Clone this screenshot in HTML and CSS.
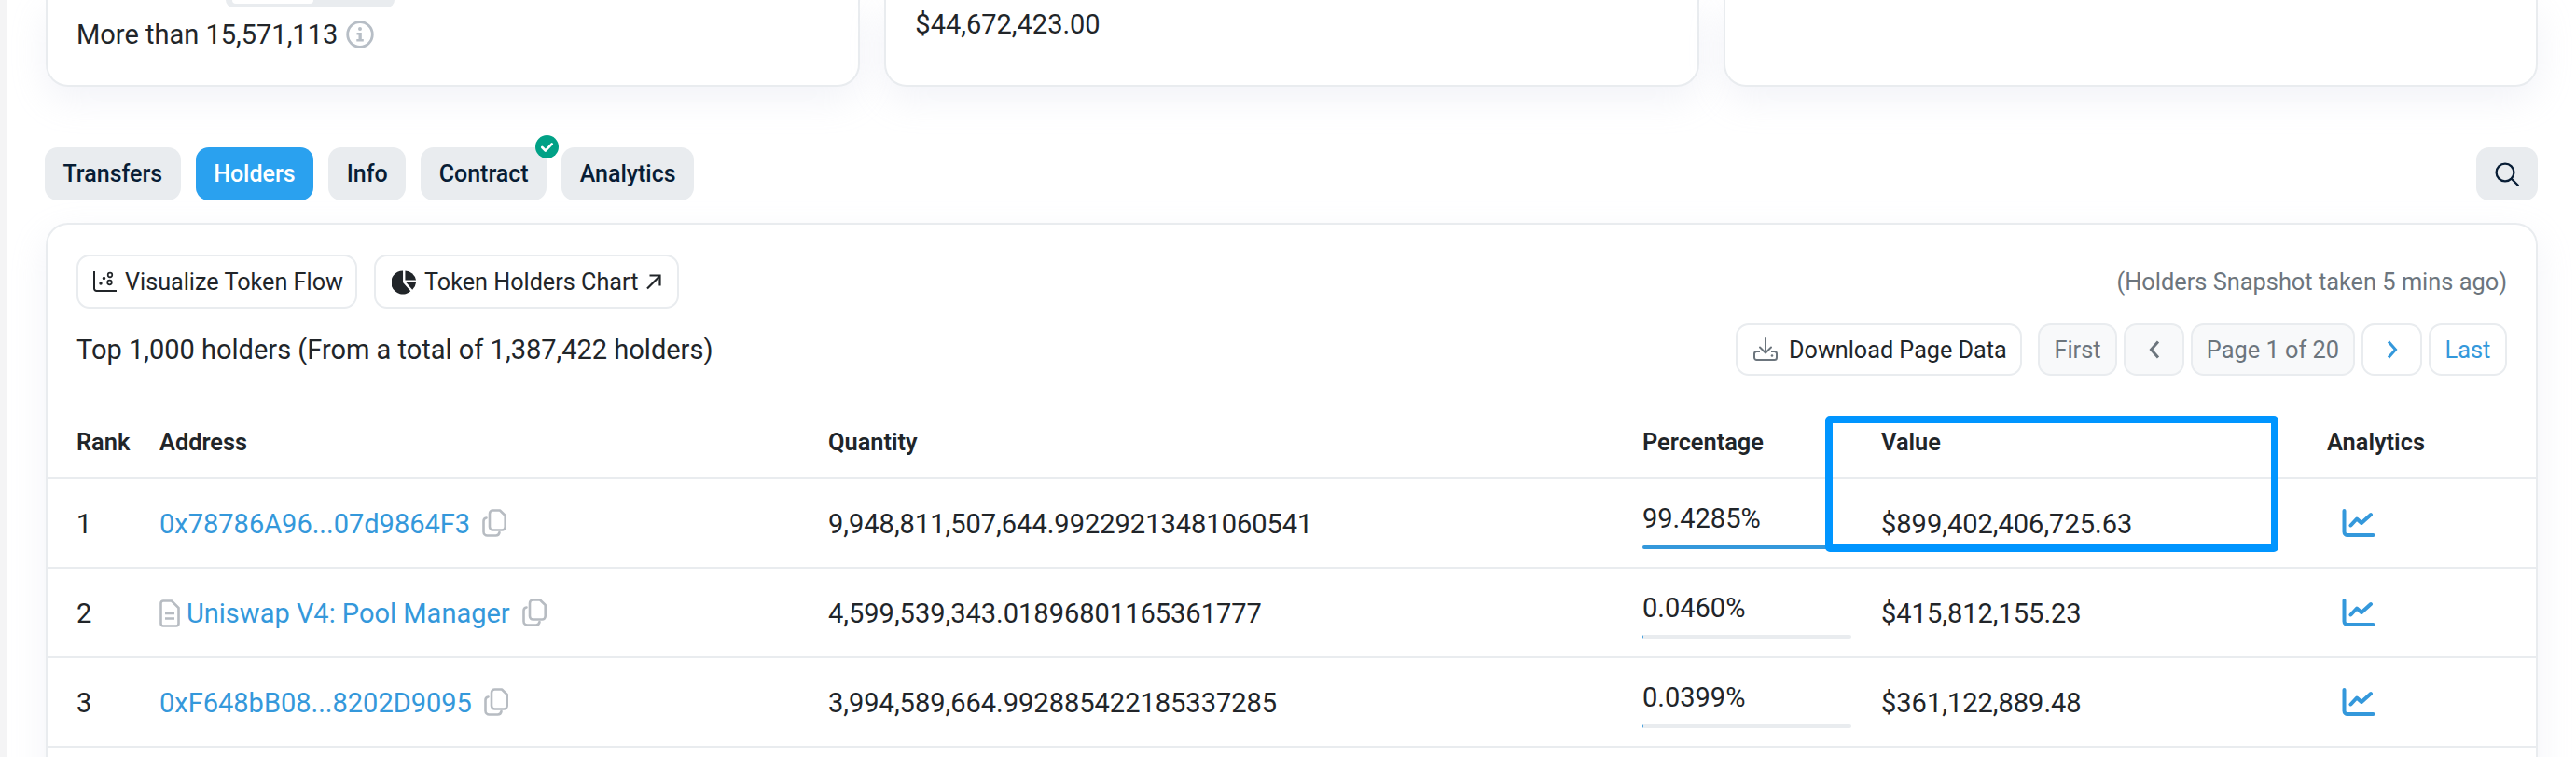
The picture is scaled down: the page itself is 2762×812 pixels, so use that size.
FILE: index.html
```html
<!DOCTYPE html>
<html lang="en">
<head>
<meta charset="utf-8">
<title>Token Holders</title>
<link rel="stylesheet" href="styles.css">
</head>
<body>
<div class="page">
  <section class="cards">
    <div class="card">
      <div class="pill"><span class="pill-on"></span></div>
      <div class="card-line">More than 15,571,113
        <svg class="info" viewBox="0 0 30 30"><circle cx="15" cy="15" r="13.300" fill="none" stroke="#b7bec6" stroke-width="2.800"/><circle cx="15" cy="9" r="2" fill="#b7bec6"/><path d="M11.500 13h5.300v7h2v2.500h-7.500V20h2.200v-4.500h-2z" fill="#b7bec6"/></svg>
      </div>
    </div>
    <div class="card"><div class="card-value">$44,672,423.00</div></div>
    <div class="card"></div>
  </section>

  <nav class="tabs">
    <a class="tab">Transfers</a>
    <a class="tab tab-active">Holders</a>
    <a class="tab">Info</a>
    <a class="tab tab-badged">Contract
      <span class="badge"><svg viewBox="0 0 24 24"><path d="M7 12.500l3.400 3.400L17 9" fill="none" stroke="#fff" stroke-width="2.600" stroke-linecap="round" stroke-linejoin="round"/></svg></span>
    </a>
    <a class="tab">Analytics</a>
    <a class="tab tab-search"><svg viewBox="0 0 28 28" class="ico-search"><circle cx="12" cy="12" r="9.400" fill="none" stroke="#081d35" stroke-width="2.300"/><path d="M18.800 18.800l7 7" stroke="#081d35" stroke-width="2.300" stroke-linecap="round"/></svg></a>
  </nav>

  <section class="panel">
    <div class="toolbar toolbar-one">
      <div class="btn-group">
        <a class="btn btn-flow">
          <svg class="ico-flow" viewBox="0 0 25 22"><path d="M1 0.500V18.500a2.500 2.500 0 0 0 2.500 2.500H24.500" fill="none" stroke="#212529" stroke-width="2" stroke-linecap="round"/><circle cx="8" cy="13" r="1.700" fill="#212529"/><circle cx="11.500" cy="7.500" r="1.700" fill="#212529"/><circle cx="18" cy="4" r="2.300" fill="none" stroke="#212529" stroke-width="1.700"/><circle cx="17.500" cy="12" r="2.300" fill="none" stroke="#212529" stroke-width="1.700"/></svg>
          Visualize Token Flow
        </a>
        <a class="btn btn-chart">
          <svg class="ico-pie" viewBox="0 0 28 28"><path d="M12.500 1.500v13l8.500 9.700A13 13 0 1 1 12.500 1.500z" fill="#212529"/><path d="M15 1.500A12.500 12.500 0 0 1 27 12h-12z" fill="#212529"/><path d="M16 14.600h11a12.500 12.500 0 0 1-4 8z" fill="#212529"/></svg>
          Token Holders Chart
          <svg class="ico-arrow" viewBox="0 0 18 18"><path d="M2 16.500L15 3.500M4.500 2.500h11V13.500" fill="none" stroke="#212529" stroke-width="2.200"/></svg>
        </a>
      </div>
      <span class="snapshot">(Holders Snapshot taken 5 mins ago)</span>
    </div>
    <div class="toolbar toolbar-two">
      <span class="summary">Top 1,000 holders (From a total of 1,387,422 holders)</span>
      <div class="pager">
        <a class="btn btn-download">
          <svg class="ico-download" viewBox="0 0 26 26"><path d="M13 1v15M7 10.500l6 6 6-6" fill="none" stroke="#6c757d" stroke-width="2" stroke-linecap="round" stroke-linejoin="round"/><path d="M7 15H3.500A2.500 2.500 0 0 0 1 17.500v4A2.500 2.500 0 0 0 3.500 24h19a2.500 2.500 0 0 0 2.500-2.500v-4a2.500 2.500 0 0 0-2.500-2.500H19" fill="none" stroke="#6c757d" stroke-width="2"/><circle cx="20" cy="19.500" r="1.300" fill="#6c757d"/></svg>
          Download Page Data
        </a>
        <span class="pg pg-off pg-first">First</span>
        <span class="pg pg-off pg-prev"><svg class="chev" viewBox="0 0 14 22"><path d="M11 2.500L3.500 11 11 19.500" fill="none" stroke="#6c757d" stroke-width="3"/></svg></span>
        <span class="pg pg-off pg-page">Page 1 of 20</span>
        <a class="pg pg-on pg-next"><svg class="chev" viewBox="0 0 14 22"><path d="M3 2.500l7.500 8.500L3 19.500" fill="none" stroke="#3498db" stroke-width="3"/></svg></a>
        <a class="pg pg-on pg-last">Last</a>
      </div>
    </div>

    <div class="table-wrap">
      <table class="holders">
        <colgroup>
          <col class="c-rank"><col class="c-addr"><col class="c-qty"><col class="c-pct"><col class="c-val"><col>
        </colgroup>
        <thead>
          <tr><th class="first">Rank</th><th>Address</th><th>Quantity</th><th>Percentage</th><th>Value</th><th>Analytics</th></tr>
        </thead>
        <tbody>
          <tr>
            <td class="first">1</td>
            <td><a class="addr">0x78786A96...07d9864F3</a><svg class="ico-copy" viewBox="0 0 26 30"><use href="#copy"/></svg></td>
            <td>9,948,811,507,644.99229213481060541</td>
            <td class="pct"><div class="pct-text">99.4285%</div><div class="bar"><div class="fill" style="width:99.43%"></div></div></td>
            <td>$899,402,406,725.63</td>
            <td><svg class="ico-an" viewBox="0 0 36 31"><use href="#an"/></svg></td>
          </tr>
          <tr>
            <td class="first">2</td>
            <td><svg class="ico-doc" viewBox="0 0 22 30"><path d="M4 1.500h9l7.500 7.500v17a2.500 2.500 0 0 1-2.500 2.500H4A2.500 2.500 0 0 1 1.500 26V4A2.500 2.500 0 0 1 4 1.500z" fill="none" stroke="#b7bcc2" stroke-width="2.600"/><path d="M6 15h10M6 20.500h10" stroke="#b7bcc2" stroke-width="2.400"/></svg><a class="addr">Uniswap V4: Pool Manager</a><svg class="ico-copy" viewBox="0 0 26 30"><use href="#copy"/></svg></td>
            <td>4,599,539,343.01896801165361777</td>
            <td class="pct"><div class="pct-text">0.0460%</div><div class="bar"><div class="fill" style="width:0.5%"></div></div></td>
            <td>$415,812,155.23</td>
            <td><svg class="ico-an" viewBox="0 0 36 31"><use href="#an"/></svg></td>
          </tr>
          <tr>
            <td class="first">3</td>
            <td><a class="addr">0xF648bB08...8202D9095</a><svg class="ico-copy" viewBox="0 0 26 30"><use href="#copy"/></svg></td>
            <td>3,994,589,664.992885422185337285</td>
            <td class="pct"><div class="pct-text">0.0399%</div><div class="bar"><div class="fill" style="width:0.5%"></div></div></td>
            <td>$361,122,889.48</td>
            <td><svg class="ico-an" viewBox="0 0 36 31"><use href="#an"/></svg></td>
          </tr>
          <tr class="row-clipped"><td colspan="6"></td></tr>
        </tbody>
      </table>
      <div class="highlight"></div>
    </div>
  </section>
</div>

<svg class="defs" width="0" height="0">
  <defs>
    <symbol id="copy" viewBox="0 0 26 30">
      <path d="M8 5a3.500 3.500 0 0 1 3.500-3.500h7.500l5.700 5.500V19a3.500 3.500 0 0 1-3.500 3.500H11.500A3.500 3.500 0 0 1 8 19z" fill="none" stroke="#b7bcc2" stroke-width="2.600" stroke-linejoin="round"/>
      <path d="M4.500 9.500A3.500 3.500 0 0 0 1.500 13V24.500A4 4 0 0 0 5.500 28.500h9a4 4 0 0 0 4-3.500" fill="none" stroke="#b7bcc2" stroke-width="2.600" stroke-linecap="round"/>
    </symbol>
    <symbol id="an" viewBox="0 0 36 31">
      <path d="M2.500 2V24.500a3.500 3.500 0 0 0 3.500 3.500H33.500" fill="none" stroke="#3498db" stroke-width="4" stroke-linecap="round"/>
      <path d="M9.500 17.500L16 10.500 21 15 31 6" fill="none" stroke="#3498db" stroke-width="4" stroke-linecap="round" stroke-linejoin="round"/>
    </symbol>
  </defs>
</svg>
</body>
</html>
```
FILE: styles.css
```css
* { box-sizing: border-box; }
html, body { margin: 0; padding: 0; height: 100%; overflow: hidden; background: #f4f4f5; }
body {
  font-family: Roboto, "Liberation Sans", sans-serif;
  font-size: 29px;
  color: #212529;
}
a { color: inherit; text-decoration: none; }
.defs { display: block; height: 0; }

.page {
  margin-left: 8px;
  height: 812px;
  background: #fff;
  padding: 0 41px;
}

.cards {
  display: grid;
  grid-template-columns: repeat(3, 1fr);
  column-gap: 26px;
  height: 93px;
}
.card {
  background: #fff;
  border: 2px solid #e9ecef;
  border-top: 0;
  border-radius: 0 0 24px 24px;
  box-shadow: 0 14px 38px rgba(189, 197, 220, 0.2);
  padding-left: 31px;
}
.pill {
  margin-left: 160px;
  width: 181px;
  height: 8px;
  background: #e9ecef;
  border-radius: 0 0 12px 12px;
  padding-left: 7px;
}
.pill-on { display: block; width: 87px; height: 4px; background: #fff; border-radius: 0 0 8px 8px; }
.card-line { margin-top: 14px; line-height: 30px; display: flex; align-items: center; gap: 9px; }
.info { width: 30px; height: 30px; }
.card-value { margin-top: 11px; line-height: 30px; }

.tabs {
  display: flex;
  gap: 16px;
  margin: 65px 0 0 -1px;
  height: 57px;
  font-size: 25px;
}
.tab {
  position: relative;
  display: flex;
  align-items: center;
  padding: 0 19.500px;
  background: #e9ecef;
  border-radius: 14px;
  color: #081d35;
  font-weight: 500;
}
.tab-active { background: #2aa1ef; color: #fff; }
.badge {
  position: absolute;
  right: -13px;
  top: -13px;
  width: 25px;
  height: 25px;
  border-radius: 50%;
  background: #00a186;
}
.badge svg { display: block; width: 25px; height: 25px; }
.tab-search { margin-left: auto; width: 66px; padding: 0; justify-content: center; }
.ico-search { width: 28px; height: 28px; }

.panel {
  margin-top: 24px;
  background: #fff;
  border: 2px solid #e9ecef;
  border-bottom: 0;
  border-radius: 24px 24px 0 0;
  box-shadow: 0 14px 38px rgba(189, 197, 220, 0.2);
  height: 700px;
}
.toolbar { display: flex; justify-content: space-between; align-items: center; padding: 0 31px; }
.toolbar-one { margin-top: 32px; height: 58px; }
.toolbar-two { margin-top: 16px; height: 56px; }
.btn-group { display: flex; gap: 18px; height: 58px; }
.btn {
  display: flex;
  align-items: center;
  background: #fff;
  border: 2px solid #e9ecef;
  border-radius: 14px;
  color: #212529;
  white-space: nowrap;
  font-size: 25.200px;
}
.btn-flow { width: 301px; padding-left: 16px; gap: 9px; }
.btn-chart { width: 327px; padding-left: 17px; gap: 8px; }
.ico-flow { width: 25px; height: 22px; }
.ico-pie { width: 27px; height: 27px; }
.ico-arrow { width: 18px; height: 18px; }
.snapshot { color: #6c757d; font-size: 25.375px; }

.pager { display: flex; gap: 7px; height: 56px; }
.btn-download { width: 307px; padding-left: 17px; gap: 12px; margin-right: 10px; }
.ico-download { width: 26px; height: 26px; }
.pg {
  display: flex;
  align-items: center;
  justify-content: center;
  border: 2px solid #e9ecef;
  border-radius: 14px;
  font-size: 25.375px;
}
.pg-off { background: #f8f9fa; color: #6c757d; }
.pg-on { background: #fff; color: #3498db; }
.pg-first { width: 85px; }
.pg-prev { width: 65px; }
.pg-page { width: 176px; }
.pg-next { width: 65px; }
.pg-last { width: 84px; }
.chev { width: 14px; height: 22px; }

.table-wrap { position: relative; margin-top: 31px; }
.holders { width: 100%; table-layout: fixed; border-collapse: separate; border-spacing: 0; }
.c-rank { width: 120px; }
.c-addr { width: 717px; }
.c-qty { width: 873px; }
.c-pct { width: 256px; }
.c-val { width: 478px; }
.holders th, .holders td { padding: 2px 0 0; border-bottom: 2px solid #e9ecef; text-align: left; vertical-align: middle; white-space: nowrap; }
.holders th { height: 80px; font-weight: 600; font-size: 25.375px; color: #212529; }
.holders tbody tr { height: 96px; }
.holders .first { padding-left: 31px; }
.addr { color: #3498db; }
.ico-copy { width: 26px; height: 30px; margin-left: 13px; vertical-align: -4px; }
.ico-doc { width: 22px; height: 30px; margin-right: 7px; vertical-align: -5px; }
.ico-an { display: block; width: 36px; height: 31px; margin: -2px 0 0 16px; }
.holders .pct { vertical-align: top; padding-top: 24px; }
.pct-text { line-height: 36px; margin-bottom: 11px; }
.bar { width: 224px; height: 4px; background: #e9ecef; border-radius: 2px; overflow: hidden; }
.fill { height: 100%; background: #3498db; }
.highlight {
  position: absolute;
  left: 1906px;
  top: 12px;
  width: 486px;
  height: 146px;
  border: 8px solid #0095ff;
  border-radius: 5px;
}
```
